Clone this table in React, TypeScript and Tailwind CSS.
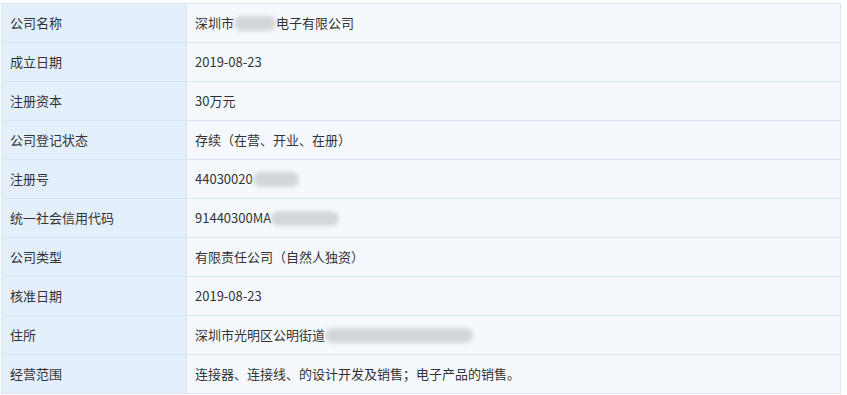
const ROWS: { label: string; value: React.ReactNode }[] = [
  {
    label: "公司名称",
    value: (
      <>
        深圳市<Blur w="w-[42px]" />电子有限公司
      </>
    ),
  },
  { label: "成立日期", value: "2019-08-23" },
  { label: "注册资本", value: "30万元" },
  { label: "公司登记状态", value: "存续（在营、开业、在册）" },
  {
    label: "注册号",
    value: (
      <>
        44030020
        <Blur w="w-[46px]" />
      </>
    ),
  },
  {
    label: "统一社会信用代码",
    value: (
      <>
        91440300MA
        <Blur w="w-[68px]" />
      </>
    ),
  },
  { label: "公司类型", value: "有限责任公司（自然人独资）" },
  { label: "核准日期", value: "2019-08-23" },
  {
    label: "住所",
    value: (
      <>
        深圳市光明区公明街道
        <Blur w="w-[148px]" />
      </>
    ),
  },
  { label: "经营范围", value: "连接器、连接线、的设计开发及销售；电子产品的销售。" },
];

function Blur({ w }: { w: string }) {
  return (
    <span
      className={`${w} inline-block h-[15px] translate-y-[3px] rounded-full bg-[#d3d6d9] blur-[2px]`}
    />
  );
}

export default function App() {
  return (
    <div className="h-[395px] w-[847px] bg-white pl-[1px] pt-[3px] font-['Microsoft_YaHei','Noto_Sans_CJK_SC',sans-serif] text-[13px] text-[#333]">
      <table className="w-[840px] border-collapse">
        <tbody>
          {ROWS.map((r) => (
            <tr key={r.label} className="h-[39px]">
              <td className="w-[185px] border border-[#d9e6f2] bg-[#e3effb] px-[8px] align-middle">
                {r.label}
              </td>
              <td className="border border-[#d9e6f2] bg-[#f5f9fd] px-[8px] align-middle">
                {r.value}
              </td>
            </tr>
          ))}
        </tbody>
      </table>
    </div>
  );
}
